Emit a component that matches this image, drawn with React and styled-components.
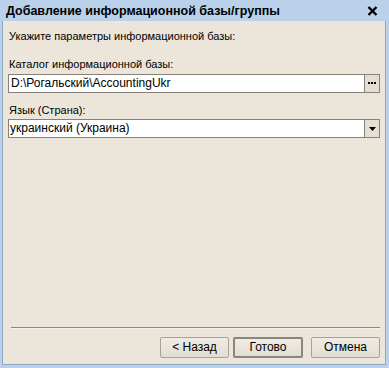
import React from 'react';
import styled, { createGlobalStyle } from 'styled-components';

const GlobalStyle = createGlobalStyle`
  html, body {
    margin: 0;
    padding: 0;
    background: #b9d1ea;
  }
  * {
    box-sizing: border-box;
  }
`;

const Window = styled.div`
  width: 389px;
  height: 368px;
  display: flex;
  flex-direction: column;
  background: #b9d1ea;
  padding: 0 3px 3px 2px;
  font-family: "Liberation Sans", Arial, sans-serif;
  font-size: 11px;
  color: #000;
`;

const TitleBar = styled.div`
  height: 21px;
  flex: none;
  display: flex;
  align-items: center;
  justify-content: space-between;
  padding: 1px 8px 0 4px;

  .title {
    font-weight: bold;
    font-size: 12.5px;
  }
`;

const Body = styled.div`
  flex: 1;
  display: flex;
  flex-direction: column;
  background: #ece5da;
  border: 1px solid #8ea7c2;
  border-top: none;
  padding: 8px 5px 0 5px;
`;

const Label = styled.div`
  height: 14px;
  line-height: 14px;
  margin-top: ${p => p.$top || 0}px;
  padding-left: 1px;
`;

const Field = styled.div`
  display: flex;
  height: 19px;
  margin-top: ${p => p.$top || 0}px;
  border: 1px solid #86817a;
  background: #fff;
`;

const FieldText = styled.div`
  flex: 1;
  font-size: 12px;
  line-height: 17px;
  padding-left: ${p => p.$pad}px;
  white-space: nowrap;
  overflow: hidden;
`;

const FieldButton = styled.div`
  width: 15px;
  flex: none;
  border-left: 1px solid #86817a;
  background: #e4ded4;
  display: flex;
  align-items: center;
  justify-content: center;
`;

const Spacer = styled.div`
  flex: 1;
`;

const Separator = styled.div`
  height: 2px;
  flex: none;
  margin: 0 0 0 3px;
  border-top: 1px solid #8b857c;
  border-bottom: 1px solid #f6f3ee;
`;

const ButtonRow = styled.div`
  display: flex;
  justify-content: flex-end;
  padding: 8px 0 6px 0;
`;

const Button = styled.div`
  width: ${p => p.$w || 69}px;
  height: 21px;
  margin-left: ${p => p.$gap || 0}px;
  display: flex;
  align-items: center;
  justify-content: center;
  font-size: 12px;
  background: linear-gradient(#f0ece5, #e2ddd4);
  border: ${p => (p.$default ? '2px solid #8a857d' : '1px solid #a7a298')};
  border-radius: 2px;
  padding-bottom: 1px;
`;

export default function App() {
  return (
    <>
      <GlobalStyle />
      <Window>
        <TitleBar>
          <span className="title">Добавление информационной базы/группы</span>
          <svg width="11" height="10" viewBox="0 0 11 10">
            <path d="M1.5 1 L9.5 9 M9.5 1 L1.5 9" stroke="#000" strokeWidth="2.4" />
          </svg>
        </TitleBar>
        <Body>
          <Label>Укажите параметры информационной базы:</Label>
          <Label $top={14}>Каталог информационной базы:</Label>
          <Field $top={3}>
            <FieldText $pad={2}>D:\Рогальский\AccountingUkr</FieldText>
            <FieldButton>
              <svg width="9" height="3" viewBox="0 0 9 3">
                <rect x="0" y="0" width="2" height="2" fill="#000" />
                <rect x="3" y="0" width="2" height="2" fill="#000" />
                <rect x="6" y="0" width="2" height="2" fill="#000" />
              </svg>
            </FieldButton>
          </Field>
          <Label $top={10}>Язык (Страна):</Label>
          <Field $top={2}>
            <FieldText $pad={1}>украинский (Украина)</FieldText>
            <FieldButton>
              <svg width="7" height="4" viewBox="0 0 7 4">
                <path d="M0 0 H7 L3.5 4 Z" fill="#000" />
              </svg>
            </FieldButton>
          </Field>
          <Spacer />
          <Separator />
          <ButtonRow>
            <Button>&lt; Назад</Button>
            <Button $w={70} $gap={4} $default>Готово</Button>
            <Button $gap={8}>Отмена</Button>
          </ButtonRow>
        </Body>
      </Window>
    </>
  );
}
